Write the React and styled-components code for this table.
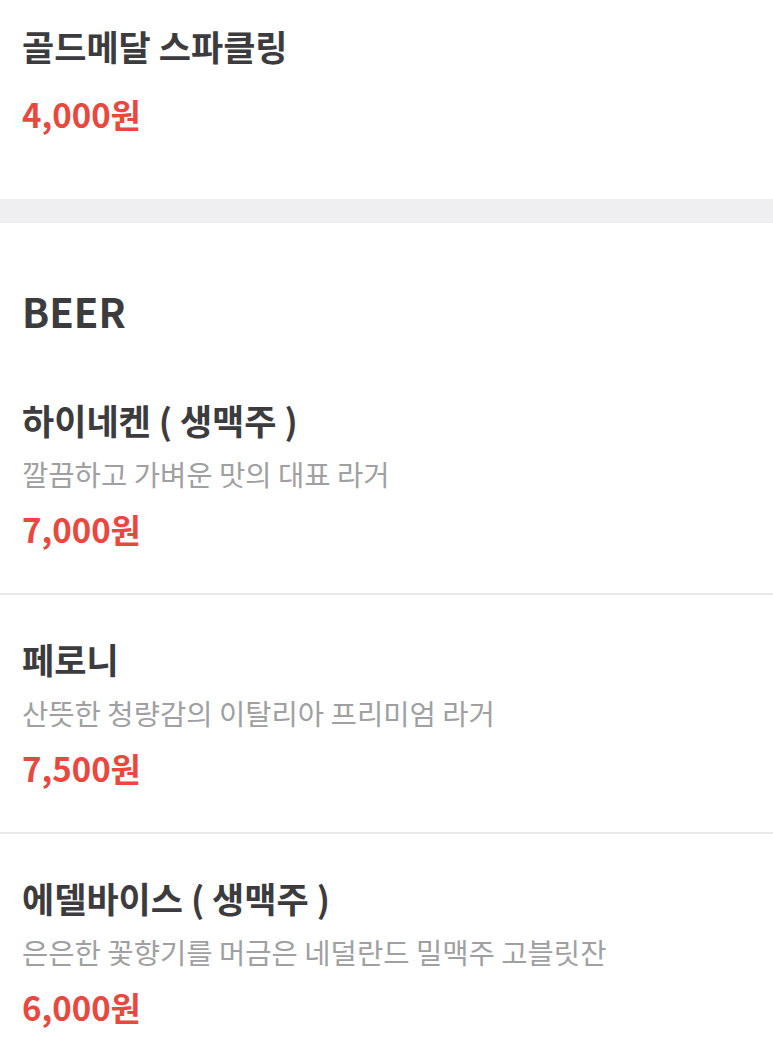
import React from 'react'
import styled, { createGlobalStyle } from 'styled-components'

const GlobalStyle = createGlobalStyle`
  html, body {
    margin: 0;
    padding: 0;
    background: #ffffff;
  }
  body {
    font-family: "Noto Sans CJK KR", "Noto Sans", sans-serif;
    -webkit-font-smoothing: antialiased;
  }
`

const Page = styled.div`
  width: 773px;
  background: #ffffff;
  overflow: hidden;
`

const Section = styled.section`
  padding: ${props => props.$top || 0}px 0 0;
`

const SectionTitle = styled.h2`
  margin: 0 0 18px;
  padding: 0 22px;
  font-size: 40px;
  line-height: 54px;
  font-weight: 700;
  color: #3c3c3e;
`

const Gap = styled.div`
  height: 24px;
  background: #efeff1;
`

const Item = styled.div`
  padding: ${props => props.$top}px 22px ${props => props.$bottom}px;
  border-bottom: ${props => (props.$last ? 'none' : '2px solid #e8e8ea')};
`

const Name = styled.div`
  font-size: 35px;
  line-height: 54px;
  font-weight: 700;
  color: #3c3c3e;
  white-space: nowrap;
`

const Desc = styled.div`
  font-size: 28.6px;
  line-height: 54px;
  font-weight: 400;
  color: #a0a0a2;
  white-space: nowrap;
`

const Price = styled.div`
  margin-top: ${props => props.$gap || 0}px;
  font-size: 33px;
  line-height: 56px;
  font-weight: 700;
  color: #e9483e;
`

const beers = [
  { name: '하이네켄 ( 생맥주 )', desc: '깔끔하고 가벼운 맛의 대표 라거', price: '7,000원' },
  { name: '페로니', desc: '산뜻한 청량감의 이탈리아 프리미엄 라거', price: '7,500원' },
  { name: '에델바이스 ( 생맥주 )', desc: '은은한 꽃향기를 머금은 네덜란드 밀맥주 고블릿잔', price: '6,000원' },
]

export default function App() {
  return (
    <Page>
      <GlobalStyle />
      <Item $top={19} $bottom={57} $last>
        <Name>골드메달 스파클링</Name>
        <Price $gap={13}>4,000원</Price>
      </Item>
      <Gap />
      <Section $top={61}>
        <SectionTitle>BEER</SectionTitle>
        {beers.map((b, i) => (
          <Item key={b.name} $top={37} $bottom={36} $last={i === beers.length - 1}>
            <Name>{b.name}</Name>
            <Desc>{b.desc}</Desc>
            <Price>{b.price}</Price>
          </Item>
        ))}
      </Section>
    </Page>
  )
}
